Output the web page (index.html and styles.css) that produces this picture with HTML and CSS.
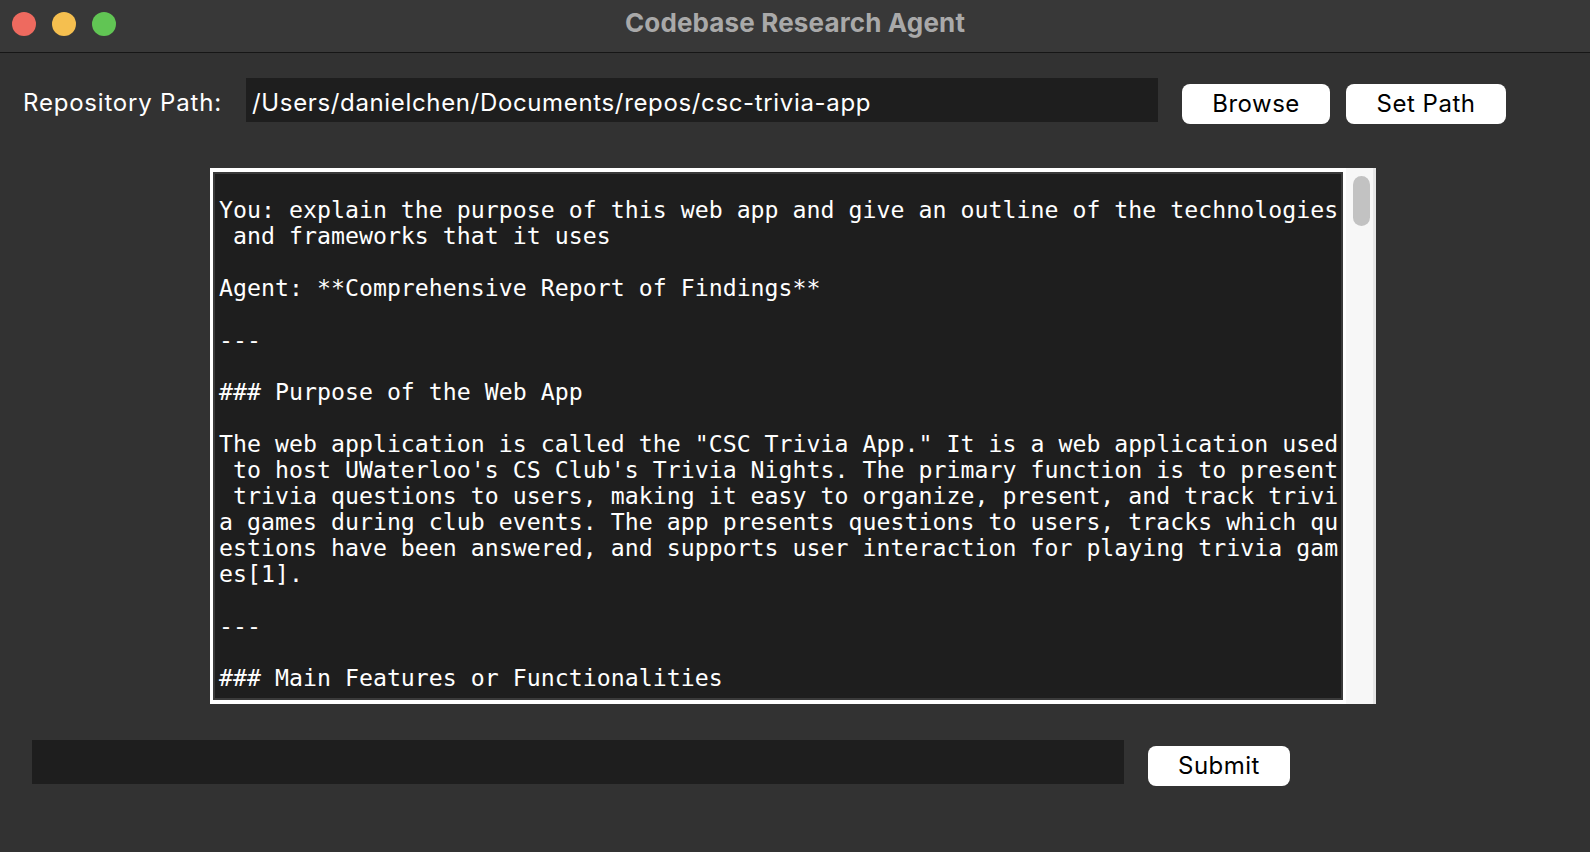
FILE: index.html
```html
<!DOCTYPE html>
<html>
<head>
<meta charset="utf-8">
<title>Codebase Research Agent</title>
<link rel="stylesheet" href="styles.css">
</head>
<body>
<div class="window">
  <header class="titlebar">
    <div class="lights">
      <span class="light red"></span>
      <span class="light yellow"></span>
      <span class="light green"></span>
    </div>
    <div class="title">Codebase Research Agent</div>
  </header>

  <div class="path-row">
    <label class="path-label">Repository Path:</label>
    <div class="entry path-entry">/Users/danielchen/Documents/repos/csc-trivia-app</div>
    <button class="btn browse">Browse</button>
    <button class="btn setpath">Set Path</button>
  </div>

  <div class="frame">
    <div class="textbox">
<pre class="log">You: explain the purpose of this web app and give an outline of the technologies
 and frameworks that it uses

Agent: **Comprehensive Report of Findings**

---

### Purpose of the Web App

The web application is called the "CSC Trivia App." It is a web application used
 to host UWaterloo's CS Club's Trivia Nights. The primary function is to present
 trivia questions to users, making it easy to organize, present, and track trivi
a games during club events. The app presents questions to users, tracks which qu
estions have been answered, and supports user interaction for playing trivia gam
es[1].

---

### Main Features or Functionalities

</pre>
    </div>
    <div class="scrollbar">
      <div class="track"><div class="thumb"></div></div>
    </div>
  </div>

  <div class="input-row">
    <div class="entry query-entry"></div>
    <button class="btn submit">Submit</button>
  </div>
</div>
</body>
</html>
```

FILE: styles.css
```css
html, body {
  margin: 0;
  padding: 0;
  background: #323232;
}
body {
  width: 1590px;
  height: 852px;
  overflow: hidden;
  font-family: "Inter", "Liberation Sans", sans-serif;
}
.window {
  width: 1590px;
  height: 852px;
  background: #323232;
}
.titlebar {
  height: 52px;
  background: #383838;
  border-bottom: 1px solid #161616;
  display: flex;
  align-items: flex-start;
  position: relative;
}
.lights {
  display: flex;
  gap: 16px;
  padding: 12px 0 0 12px;
  position: absolute;
  left: 0;
  top: 0;
}
.light {
  width: 24px;
  height: 24px;
  border-radius: 50%;
  display: block;
}
.red { background: #ee6a5f; }
.yellow { background: #f5bf4f; }
.green { background: #61c554; }
.title {
  flex: 1;
  text-align: center;
  font-weight: 700;
  font-size: 26px;
  letter-spacing: 0.15px;
  line-height: 46px;
  color: #a9a9a9;
}
.path-row {
  display: flex;
  align-items: flex-start;
  padding: 25px 0 0 23px;
}
.path-label {
  width: 223px;
  font-size: 24px;
  letter-spacing: 0.8px;
  line-height: 38px;
  padding-top: 6px;
  color: #ffffff;
}
.entry {
  box-sizing: border-box;
  background: #1e1e1e;
  height: 44px;
  color: #ffffff;
  font-size: 24px;
  letter-spacing: 0.65px;
  line-height: 38px;
  padding: 6px 0 0 6px;
  white-space: nowrap;
  overflow: hidden;
}
.path-entry {
  width: 912px;
  margin-right: 24px;
}
.btn {
  box-sizing: border-box;
  height: 40px;
  margin-top: 6px;
  border: none;
  border-radius: 8px;
  background: #ffffff;
  color: #000000;
  font-family: "Inter", "Liberation Sans", sans-serif;
  font-size: 24px;
  letter-spacing: 0.5px;
  line-height: 40px;
  padding: 0;
}
.browse { width: 148px; margin-right: 16px; }
.setpath { width: 160px; }
.frame {
  box-sizing: border-box;
  width: 1166px;
  height: 536px;
  margin: 44px 0 0 210px;
  background: #ffffff;
  padding: 4px 0 4px 3px;
  display: flex;
}
.textbox {
  box-sizing: border-box;
  width: 1130px;
  height: 528px;
  background: #1e1e1e;
  border: 2px solid #3a3a3a;
  overflow: hidden;
  padding: 23px 0 0 4px;
}
.log {
  margin: 0;
  font-family: "DejaVu Sans Mono", monospace;
  font-size: 23.2px;
  letter-spacing: 0.03px;
  line-height: 26px;
  color: #ffffff;
  white-space: pre;
}
.scrollbar {
  flex: 1;
  display: flex;
  padding-left: 3px;
  margin-top: -4px;
  margin-bottom: -4px;
  background: #ffffff;
}
.track {
  flex: 1;
  background: #f7f7f7;
  border-right: 3px solid #e6e6e6;
  padding: 8px 0 0 7px;
}
.thumb {
  width: 17px;
  height: 50px;
  border-radius: 9px;
  background: #c2c2c2;
}
.input-row {
  display: flex;
  align-items: flex-start;
  padding: 36px 0 0 32px;
}
.query-entry {
  width: 1092px;
  margin-right: 24px;
}
.submit { width: 142px; }
```
